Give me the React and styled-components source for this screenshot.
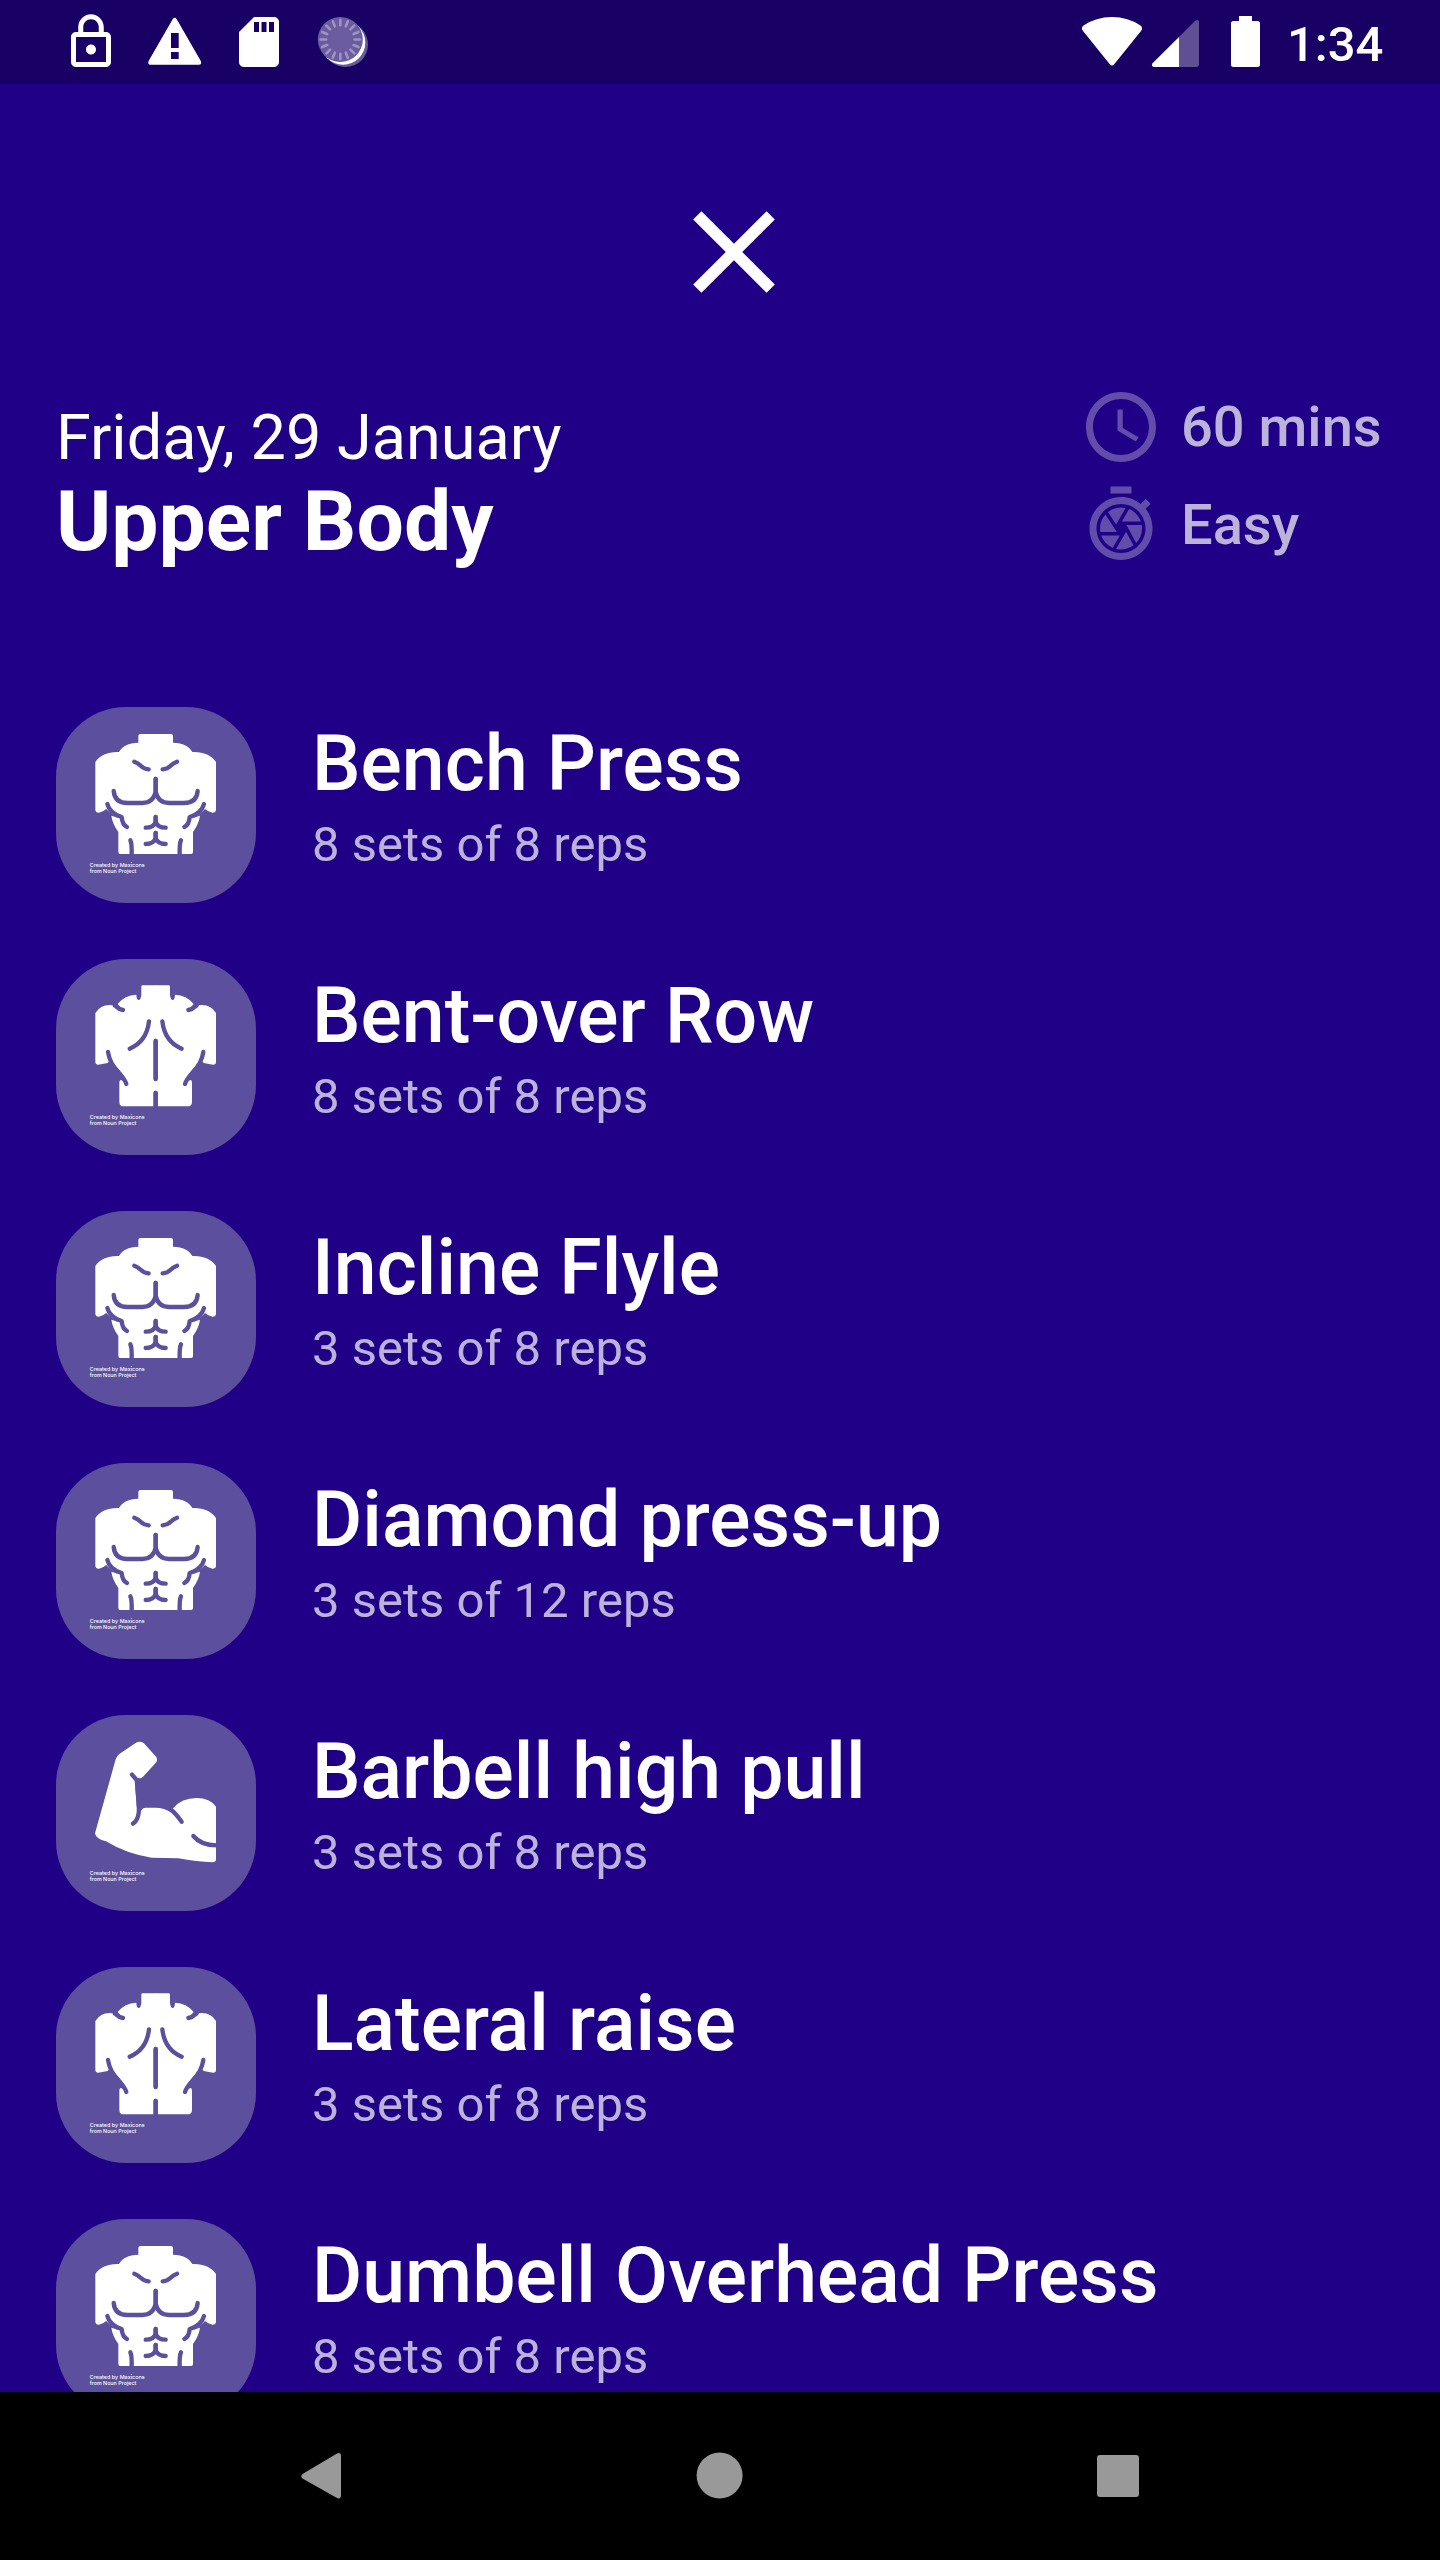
import React from "react";
import styled, { createGlobalStyle } from "styled-components";

const BG = "#200086";
const TILE = "#5c4f9d";

const GlobalStyle = createGlobalStyle`
  html, body { margin: 0; padding: 0; background: ${BG}; }
  * { box-sizing: border-box; }
`;

const Screen = styled.div`
  width: 1440px;
  height: 2560px;
  display: flex;
  flex-direction: column;
  overflow: hidden;
  background: ${BG};
  color: #fff;
  font-family: Roboto, "Liberation Sans", sans-serif;
`;

const StatusBar = styled.header`
  flex: none;
  height: 84px;
  padding: 0 55px 0 61px;
  display: flex;
  justify-content: space-between;
  background: #190065;
`;

const StatusGroup = styled.div`
  display: flex;
  gap: 1px;
`;

const StatusIcon = styled.svg`
  display: block;
  height: 84px;
`;

const Time = styled.span`
  width: 98px;
  padding-top: 16px;
  font-size: 49px;
  line-height: 57px;
  font-weight: 500;
  white-space: nowrap;
`;

const Content = styled.main`
  flex: 1;
  min-height: 0;
  overflow: hidden;
  padding: 98px 56px 0;
  display: flex;
  flex-direction: column;
`;

const CloseButton = styled.button`
  flex: none;
  width: 140px;
  height: 140px;
  margin-left: 608px;
  padding: 0;
  border: 0;
  background: none;
`;

const Summary = styled.section`
  flex: none;
  height: 385px;
  padding-top: 63px;
  display: flex;
  justify-content: space-between;
`;

const Heading = styled.div`
  padding-top: 16px;
`;

const DateText = styled.div`
  font-size: 63px;
  line-height: 74px;
`;

const Title = styled.h1`
  margin: -2px 0 0;
  font-size: 84px;
  line-height: 98px;
  font-weight: 700;
`;

const MetaList = styled.div`
  width: 305px;
  display: flex;
  flex-direction: column;
  gap: 14px;
`;

const MetaRow = styled.div`
  height: 84px;
  display: flex;
  align-items: center;
  gap: 18px;
  font-size: 56px;
  font-weight: 500;
  line-height: 66px;
  white-space: nowrap;
  color: rgba(255, 255, 255, 0.7);
`;

const Icon = styled.svg`
  display: block;
  flex: none;
  width: ${(p) => p.$size}px;
  height: ${(p) => p.$size}px;
  fill: ${(p) => p.$color || "#fff"};
`;

const ExerciseList = styled.div`
  display: flex;
  flex-direction: column;
  gap: 56px;
`;

const ExerciseRow = styled.article`
  flex: none;
  height: 196px;
  display: flex;
  gap: 56px;
`;

const Tile = styled.div`
  flex: none;
  width: 200px;
  height: 196px;
  border-radius: 70px;
  overflow: hidden;
  background: ${TILE};
`;

const TileArt = styled.svg`
  display: block;
  width: 200px;
  height: 196px;
`;

const ExerciseText = styled.div`
  padding-top: 12px;
  display: flex;
  flex-direction: column;
  gap: 7px;
  white-space: nowrap;
`;

const ExerciseName = styled.h2`
  margin: 0;
  font-size: 77px;
  line-height: 90px;
  font-weight: 500;
`;

const Reps = styled.div`
  font-size: 49px;
  line-height: 57px;
  color: rgba(255, 255, 255, 0.7);
`;

const NavBar = styled.nav`
  flex: none;
  height: 168px;
  padding: 0 284px;
  display: flex;
  align-items: center;
  justify-content: space-between;
  background: #000;
`;

const cut = {
  fill: "none",
  stroke: TILE,
  strokeWidth: 13,
  strokeLinecap: "round",
  strokeLinejoin: "round",
};

function Mirrored({ children }) {
  return (
    <>
      <g>{children}</g>
      <g transform="translate(694 0) scale(-1 1)">{children}</g>
    </>
  );
}

function Chest() {
  return (
    <>
      <Mirrored>
        <path
          fill="#fff"
          d="M345 132H393Q399 132 399 138V158C428 158 450 170 457 186C485 184 515 194 528 216V361Q527 369 517 368Q505 366 495 357Q482 372 458 384L480 377Q477 400 459 426V486Q459 492 453 492H345Z"
        />
      </Mirrored>
      <Mirrored>
        <g {...cut}>
          <path d="M368 238Q382 237 391 228T411 215" />
          <path d="M347 267V305Q354 339 387 339H432Q470 339 473 303" />
          <path d="M492 342Q485 370 449 381Q447 405 433 411" />
          <path d="M347 381V396Q353 413 377 413" />
          <path d="M347 429V445Q353 462 377 462" />
          <path d="M423 451Q418 460 419 496" />
        </g>
      </Mirrored>
    </>
  );
}

function Back() {
  return (
    <>
      <Mirrored>
        <path
          fill="#fff"
          d="M345 121H386Q390 121 390 125V150Q392 165 398 165Q404 165 405 149Q440 150 461 177Q452 188 446 194L476 181Q510 176 528 204V351Q528 359 519 359L491 354L486 348Q476 366 458 382Q446 396 440 410L450 405Q456 405 456 412V470Q456 484 443 484H345Z"
        />
      </Mirrored>
      <Mirrored>
        <g {...cut}>
          <path d="M445 195Q457 193 470 181" />
          <path d="M367 229Q374 290 425 311" />
          <path d="M347 288V402" />
          <path d="M347 444V490" />
          <path d="M490 321Q485 355 458 382Q438 405 435 417" />
        </g>
      </Mirrored>
    </>
  );
}

function Arm() {
  return (
    <>
      <path
        fill="#fff"
        d="M227 178Q230 167 239 161L288 128Q300 122 311 129L349 171Q353 180 349 187L309 230Q303 236 293 234L284 241L291 330L303 334Q305 324 318 323H345Q375 323 392 337L399 325Q425 294 470 294Q510 294 528 320V478Q528 487 518 487Q470 485 415 475L335 473Q260 462 198 424Q168 418 165 400Z"
      />
      <g {...cut}>
        <path d="M276 224L291 241L297 325Q297 360 279 371" />
        <path d="M394 330Q405 338 425 365" />
        <path d="M460 408Q485 438 536 436" />
      </g>
    </>
  );
}

const ART = {
  chest: { Shape: Chest, top: 51, caption: 529 },
  back: { Shape: Back, top: 42, caption: 520 },
  arm: { Shape: Arm, top: 45, caption: 523 },
};

function MuscleTile({ kind }) {
  const { Shape, top, caption } = ART[kind];
  return (
    <Tile>
      <TileArt viewBox={`48 ${top} 600 588`}>
        <Shape />
        <g fill="#fff" fontFamily='Inter, "Liberation Sans", sans-serif' fontSize="16" fontWeight="500">
          <text x="149" y={caption + 2} textLength="165">Created by Maxicons</text>
          <text x="149" y={caption + 20} textLength="140">from Noun Project</text>
        </g>
      </TileArt>
    </Tile>
  );
}

const exercises = [
  ["Bench Press", "8 sets of 8 reps", "chest"],
  ["Bent-over Row", "8 sets of 8 reps", "back"],
  ["Incline Flyle", "3 sets of 8 reps", "chest"],
  ["Diamond press-up", "3 sets of 12 reps", "chest"],
  ["Barbell high pull", "3 sets of 8 reps", "arm"],
  ["Lateral raise", "3 sets of 8 reps", "back"],
  ["Dumbell Overhead Press", "8 sets of 8 reps", "chest"],
];

const ticks = Array.from({ length: 16 }, (_, i) => i * 22.5);

function NotificationIcons() {
  return (
    <StatusIcon width="320" viewBox="61 0 320 84" fill="#fff">
      <path
        transform="translate(61 12) scale(2.5)"
        d="M12 17c1.1 0 2-.9 2-2s-.9-2-2-2-2 .9-2 2 .9 2 2 2zm6-9h-.9V6c0-2.76-2.34-5.1-5.1-5.1S6.9 3.24 6.9 6v2H6c-1.1 0-2 .9-2 2v10c0 1.1.9 2 2 2h12c1.1 0 2-.9 2-2V10c0-1.1-.9-2-2-2zM8.9 6c0-1.71 1.39-3.1 3.1-3.1s3.1 1.39 3.1 3.1v2H8.9V6zM18 20H6V10h12v10z"
      />
      <path
        fillRule="evenodd"
        d="M172.8 19Q174.700 16.600 176.600 19L200.800 61Q202 64.500 199 64.700H150.400Q147.400 64.500 148.600 61ZM171 33V48H178.700V33ZM171 52V59H178.700V52Z"
      />
      <path
        transform="translate(229 12) scale(2.5)"
        d="M18 2h-8L4 8v12c0 1.1.9 2 2 2h12c1.1 0 2-.9 2-2V4c0-1.100-.9-2-2-2zm-6 6h-2V4h2v4zm3 0h-2V4h2v4zm3 0h-2V4h2v4z"
      />
      <circle cx="345.500" cy="44.500" r="22.500" fill="#665a9a" />
      <circle cx="343" cy="42.500" r="22.300" />
      <circle cx="340.300" cy="39.500" r="22.500" fill="#6a5c9e" />
      <g stroke="#9e94c2" strokeWidth="2.600" strokeLinecap="round">
        {ticks.map((a) => (
          <line key={a} x1="340.300" y1="19.800" x2="340.300" y2="25.200" transform={`rotate(${a} 340.3 39.5)`} />
        ))}
      </g>
    </StatusIcon>
  );
}

function SystemIcons() {
  return (
    <StatusIcon width="206" viewBox="1080 0 206 84" fill="#fff">
      <path d="M1083 31Q1080.500 28 1083.500 25.500Q1096 17 1112 17T1140.500 25.500Q1143.500 28 1141 31L1114 64.500Q1112 66.500 1110 64.500Z" />
      <path fill="#604f93" d="M1179 37L1195.500 20.600Q1199 18.500 1199 23V64Q1199 67 1196 67H1179Z" />
      <path d="M1179 37V67H1154Q1151 66.500 1152.300 63.500Z" />
      <path d="M1239 16H1252V21H1257.500Q1260 21 1260 23.500V64.500Q1260 67 1257.500 67H1233.500Q1231 67 1231 64.500V23.500Q1231 21 1233.500 21H1239Z" />
    </StatusIcon>
  );
}

export default function App() {
  const faded = "rgba(255,255,255,0.3)";
  return (
    <Screen>
      <GlobalStyle />
      <StatusBar>
        <NotificationIcons />
        <StatusGroup>
          <SystemIcons />
          <Time>1:34</Time>
        </StatusGroup>
      </StatusBar>
      <Content>
        <CloseButton aria-label="Close">
          <Icon $size={140} viewBox="0 0 24 24">
            <path d="M19 6.410L17.590 5 12 10.590 6.410 5 5 6.410 10.590 12 5 17.590 6.410 19 12 13.410 17.590 19 19 17.590 13.410 12z" />
          </Icon>
        </CloseButton>
        <Summary>
          <Heading>
            <DateText>Friday, 29 January</DateText>
            <Title>Upper Body</Title>
          </Heading>
          <MetaList>
            <MetaRow>
              <Icon $size={84} $color={faded} viewBox="0 0 24 24">
                <path d="M11.990 2C6.470 2 2 6.480 2 12s4.470 10 9.990 10C17.520 22 22 17.520 22 12S17.520 2 11.990 2zM12 20c-4.420 0-8-3.580-8-8s3.580-8 8-8 8 3.580 8 8-3.580 8-8 8zm.5-13H11v6l5.250 3.150.75-1.230-4.500-2.670z" />
              </Icon>
              60 mins
            </MetaRow>
            <MetaRow>
              <Icon $size={84} $color={faded} viewBox="0 0 24 24">
                <path d="M15 1H9v2h6V1zm4.030 6.390l1.420-1.420c-.43-.51-.9-.99-1.410-1.410l-1.420 1.420C16.070 4.740 14.120 4 12 4c-4.970 0-9 4.030-9 9s4.020 9 9 9 9-4.030 9-9c0-2.120-.74-4.070-1.970-5.610zM12 20c-3.870 0-7-3.130-7-7s3.130-7 7-7 7 3.130 7 7-3.130 7-7 7zm-.320-5H6.350c.57 1.620 1.820 2.920 3.410 3.560l-.11-.06 2.030-3.500zm5.970-4c-.57-1.600-1.780-2.890-3.340-3.540L12.260 11h5.390zm-7.040 7.830c.45.11.91.17 1.390.17 1.340 0 2.570-.45 3.570-1.190l-2.110-3.900-2.850 4.920zM7.550 8.990C6.590 10.050 6 11.460 6 13c0 .34.04.67.09 1h4.720L7.550 8.990zm8.790 8.140C17.370 16.060 18 14.600 18 13c0-.34-.04-.67-.09-1h-4.340l2.770 5.130zm-3.010-9.980C12.900 7.060 12.460 7 12 7c-1.400 0-2.690.49-3.710 1.290l2.320 3.560 2.720-4.700z" />
              </Icon>
              Easy
            </MetaRow>
          </MetaList>
        </Summary>
        <ExerciseList>
          {exercises.map(([name, reps, kind]) => (
            <ExerciseRow key={name}>
              <MuscleTile kind={kind} />
              <ExerciseText>
                <ExerciseName>{name}</ExerciseName>
                <Reps>{reps}</Reps>
              </ExerciseText>
            </ExerciseRow>
          ))}
        </ExerciseList>
      </Content>
      <NavBar>
        <Icon $size={74} $color="#999" viewBox="0 0 74 74">
          <path d="M18.500 35L53 14.500Q57 13 57 17V56Q57 60.500 53 59L18.500 39.500Q16 37.300 18.500 35Z" />
        </Icon>
        <Icon $size={74} $color="#999" viewBox="0 0 74 74">
          <circle cx="36.600" cy="36.500" r="23" />
        </Icon>
        <Icon $size={74} $color="#999" viewBox="0 0 74 74">
          <rect x="15" y="16" width="42" height="42" rx="3" />
        </Icon>
      </NavBar>
    </Screen>
  );
}
